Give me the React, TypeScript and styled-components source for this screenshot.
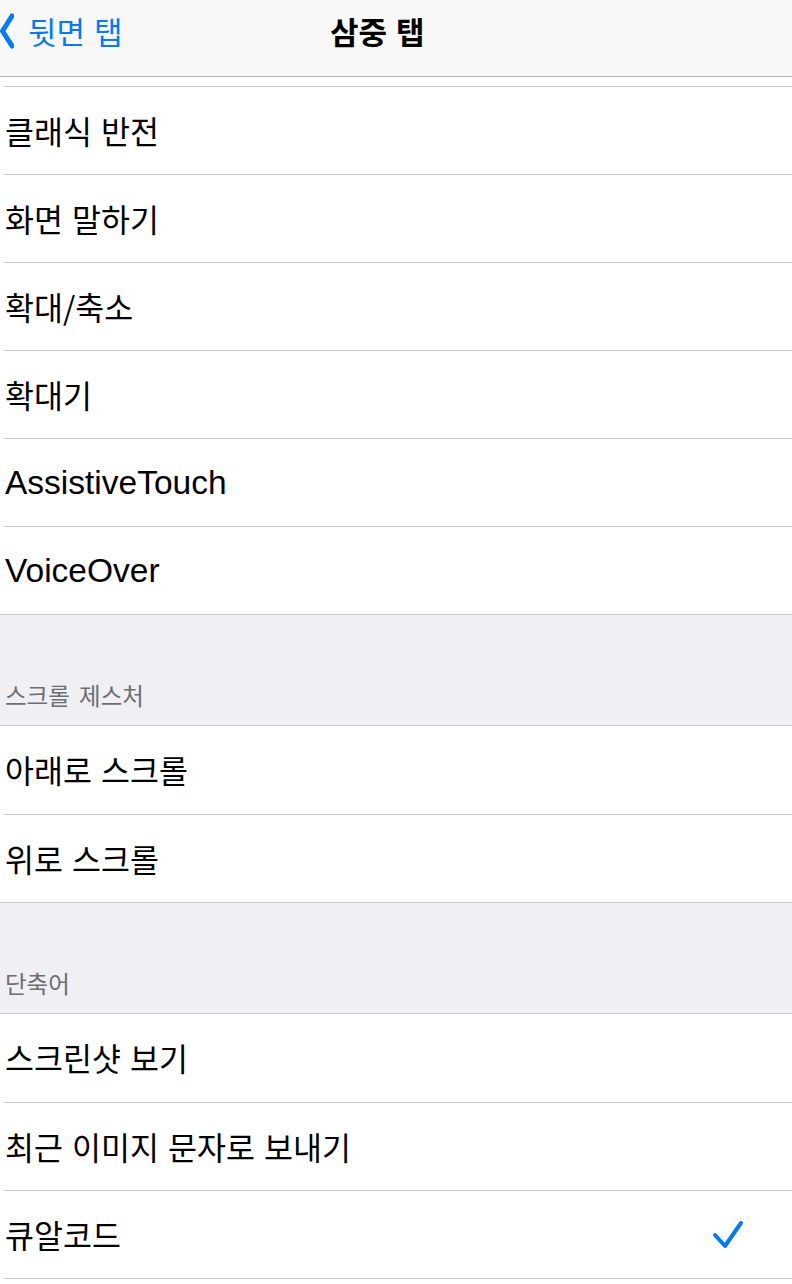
import styled, { createGlobalStyle } from "styled-components";

const GlobalStyle = createGlobalStyle`
  html, body {
    margin: 0;
    padding: 0;
    background: #ffffff;
  }
  body {
    width: 792px;
    overflow: hidden;
    font-family: "Liberation Sans", "Noto Sans CJK KR", sans-serif;
    -webkit-font-smoothing: antialiased;
  }
`;

const Screen = styled.div`
  width: 792px;
  min-height: 1284px;
  background: #ffffff;
`;

const NavBar = styled.header`
  height: 77px;
  box-sizing: border-box;
  padding-bottom: 15px;
  background: #f8f8f8;
  border-bottom: 1px solid #b2b2b2;
  display: grid;
  grid-template-columns: 330px auto 1fr;
  align-items: center;
`;

const BackButton = styled.div`
  display: flex;
  align-items: center;
  gap: 14px;
  color: #007aff;
`;

const NavText = styled.span<{ $bold?: boolean }>`
  font-family: "Noto Sans CJK KR", sans-serif;
  font-size: 31px;
  line-height: 1;
  letter-spacing: 0;
  word-spacing: 2px;
  font-weight: ${(p) => (p.$bold ? 700 : 400)};
  color: ${(p) => (p.$bold ? "#000000" : "#007aff")};
`;

const List = styled.div`
  padding-top: 9px;
`;

const Row = styled.div`
  margin-left: 4px;
  height: 88px;
  box-sizing: border-box;
  border-top: 1px solid #c8c7cc;
  display: flex;
  align-items: center;
  justify-content: space-between;
  padding-right: 48px;

  &:last-child {
    border-bottom: 1px solid #c8c7cc;
    height: 89px;
  }
`;

const Label = styled.span<{ $latin?: boolean }>`
  font-family: ${(p) =>
    p.$latin ? `"Liberation Sans", sans-serif` : `"Noto Sans CJK KR", sans-serif`};
  font-size: ${(p) => (p.$latin ? "33.5px" : "31.5px")};
  letter-spacing: 0;
  word-spacing: ${(p) => (p.$latin ? "0" : "2px")};
  line-height: 1;
  color: #000000;
  margin-left: 1px;
`;

const SectionHeader = styled.div<{ $h: number }>`
  height: ${(p) => p.$h}px;
  box-sizing: border-box;
  background: #efeff4;
  border-top: 1px solid #c8c7cc;
  border-bottom: 1px solid #c8c7cc;
  display: flex;
  align-items: flex-end;
  padding: 0 0 18px 5px;
  font-family: "Noto Sans CJK KR", sans-serif;
  font-size: 23.5px;
  line-height: 1;
  letter-spacing: 0;
  word-spacing: 4px;
  color: #6d6d72;

  & + ${Row} {
    border-top: none;
  }
`;

const Chevron = () => (
  <svg width="14" height="40" viewBox="0 0 14 40">
    <polyline
      points="12,5 2.5,20 12,35"
      fill="none"
      stroke="#007aff"
      strokeWidth="5"
      strokeLinecap="round"
      strokeLinejoin="round"
    />
  </svg>
);

const Check = () => (
  <svg width="32" height="30" viewBox="0 0 32 30">
    <polyline
      points="3,15 13,26 29,3"
      fill="none"
      stroke="#007aff"
      strokeWidth="4"
      strokeLinecap="round"
      strokeLinejoin="round"
    />
  </svg>
);

type Item = { label: string; latin?: boolean; checked?: boolean };

const actions: Item[] = [
  { label: "클래식 반전" },
  { label: "화면 말하기" },
  { label: "확대/축소" },
  { label: "확대기" },
  { label: "AssistiveTouch", latin: true },
  { label: "VoiceOver", latin: true },
];

const scroll: Item[] = [{ label: "아래로 스크롤" }, { label: "위로 스크롤" }];

const shortcuts: Item[] = [
  { label: "스크린샷 보기" },
  { label: "최근 이미지 문자로 보내기" },
  { label: "큐알코드", checked: true },
];

const renderRows = (items: Item[]) =>
  items.map((it) => (
    <Row key={it.label}>
      <Label $latin={it.latin}>{it.label}</Label>
      {it.checked && <Check />}
    </Row>
  ));

export default function App() {
  return (
    <Screen>
      <GlobalStyle />
      <NavBar>
        <BackButton>
          <Chevron />
          <NavText>뒷면 탭</NavText>
        </BackButton>
        <NavText $bold>삼중 탭</NavText>
      </NavBar>
      <List>
        {renderRows(actions)}
        <SectionHeader $h={112}>스크롤 제스처</SectionHeader>
        {renderRows(scroll)}
        <SectionHeader $h={112}>단축어</SectionHeader>
        {renderRows(shortcuts)}
      </List>
    </Screen>
  );
}
